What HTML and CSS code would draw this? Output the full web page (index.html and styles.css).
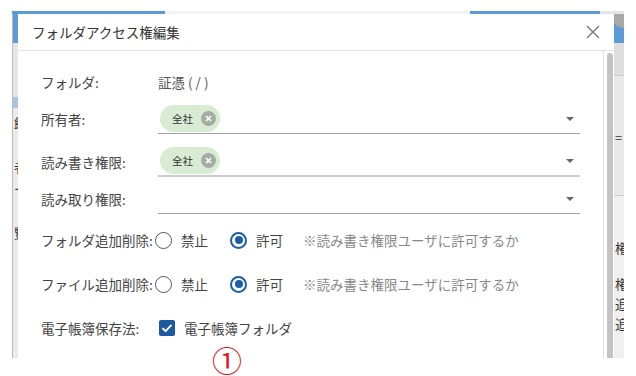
FILE: index.html
```html
<!DOCTYPE html>
<html>
  <head>
    <title>フォルダアクセス権編集</title>
    <meta name="viewport" content="width=device-width, initial-scale=1.0">
    <link rel="stylesheet" href="styles.css">
  </head>
  <body>
    <div class="screen">
      <div class="backdrop">
        <div class="side side-left">
          <span>館</span>
          <span>：</span>
          <span>者</span>
          <span>ー</span>
          <span>：</span>
          <span>覧</span>
        </div>
        <section class="dialog">
          <header class="dialog-head">
            <h1>フォルダアクセス権編集</h1>
            <button class="close" type="button">
              <svg width="14" height="14" viewBox="0 0 14 14"><path d="M1 1L13 13M13 1L1 13" stroke="#777" stroke-width="1.4" fill="none"/></svg>
            </button>
          </header>
          <div class="dialog-body">
            <form class="form">
              <div class="row row-text">
                <span class="label">フォルダ:</span>
                <span class="value">証憑 ( / )</span>
              </div>
              <div class="row row-owner">
                <span class="label">所有者:</span>
                <div class="select">
                  <span class="chip">全社
                    <svg class="chip-x" width="15" height="15" viewBox="0 0 15 15"><circle cx="7.5" cy="7.5" r="7.5" fill="#a3ada1"/><path d="M5 5L10 10M10 5L5 10" stroke="#fff" stroke-width="1.7"/></svg>
                  </span>
                  <span class="caret"></span>
                </div>
              </div>
              <div class="row row-write">
                <span class="label">読み書き権限:</span>
                <div class="select select-light">
                  <span class="chip">全社
                    <svg class="chip-x" width="15" height="15" viewBox="0 0 15 15"><circle cx="7.5" cy="7.5" r="7.5" fill="#a3ada1"/><path d="M5 5L10 10M10 5L5 10" stroke="#fff" stroke-width="1.7"/></svg>
                  </span>
                  <span class="caret"></span>
                </div>
              </div>
              <div class="row row-read">
                <span class="label">読み取り権限:</span>
                <div class="select">
                  <span class="caret"></span>
                </div>
              </div>
              <div class="row row-radio">
                <span class="label">フォルダ追加削除:</span>
                <span class="radio"><span class="dot"></span>禁止</span>
                <span class="radio"><span class="dot is-on"></span>許可</span>
                <span class="note">※読み書き権限ユーザに許可するか</span>
              </div>
              <div class="row row-radio">
                <span class="label">ファイル追加削除:</span>
                <span class="radio"><span class="dot"></span>禁止</span>
                <span class="radio"><span class="dot is-on"></span>許可</span>
                <span class="note">※読み書き権限ユーザに許可するか</span>
              </div>
              <div class="row row-radio">
                <span class="label">電子帳簿保存法:</span>
                <span class="checkbox">
                  <span class="box">
                    <svg width="16" height="16" viewBox="0 0 16 16"><path d="M3.5 8.2L6.6 11.2L12.5 4.8" stroke="#fff" stroke-width="1.8" fill="none"/></svg>
                  </span>
                  電子帳簿フォルダ
                </span>
              </div>
            </form>
            <div class="scrollbar"><div class="thumb"></div></div>
          </div>
        </section>
        <div class="side side-right">
          <span class="avatar"></span>
          <span class="frag frag-a">=</span>
          <span class="frag frag-b">権</span>
          <span class="frag">権</span>
          <span class="frag">追</span>
          <span class="frag">追</span>
        </div>
      </div>
      <span class="marker">①</span>
    </div>
  </body>
</html>
```
FILE: styles.css
```css
* {
  margin: 0;
  padding: 0;
  box-sizing: border-box;
  font-family: "Noto Sans CJK JP", "Noto Sans", sans-serif;
}
body {
  background: #fff;
}
.screen {
  position: relative;
  width: 636px;
  height: 376px;
}
.backdrop {
  display: flex;
  width: 612px;
  height: 347px;
  margin: 11px 12px 0 12px;
  overflow: hidden;
  background:
    linear-gradient(to right, #5b9bd6 0, #5b9bd6 153px, #f3f3f3 153px, #f3f3f3 458px, #5b9bd6 458px, #5b9bd6 588px, #e6e6e6 588px) top / 100% 3px no-repeat,
    #e8e8e8;
}
.side {
  display: flex;
  flex-direction: column;
  margin-top: 3px;
  overflow: hidden;
  font-size: 13px;
  color: #333;
  line-height: 1;
}
.side-left {
  width: 6px;
  border-left: 1px solid #bdbdbd;
  align-items: flex-end;
  background: linear-gradient(#5b9bd6 0, #5b9bd6 29px, #e6e6e6 29px, #e6e6e6 83px, #a9c6e6 83px, #a9c6e6 94px, #eaeaea 94px);
  padding-top: 102px;
}
.side-left span {
  margin-right: -9px;
  height: 22px;
}
.side-right {
  width: 10px;
  padding-left: 1px;
  background: linear-gradient(#5b9bd6 0, #5b9bd6 29px, #dedede 29px, #dedede 61px, #c9c9c9 61px, #c9c9c9 62px, #e9e9e9 62px, #e9e9e9 181px, #cfcfcf 181px, #cfcfcf 182px, #f0f0f0 182px);
}
.avatar {
  display: block;
  width: 22px;
  height: 18px;
  margin-left: -2px;
  margin-top: -4px;
  border-radius: 50%;
  background: #a9a9a9;
}
.frag {
  display: block;
  height: 20px;
}
.frag-a {
  margin-top: 103px;
}
.frag-b {
  margin-top: 90px;
  margin-bottom: 16px;
}
.dialog {
  width: 596px;
  margin-top: 3px;
  background: #fff;
  display: flex;
  flex-direction: column;
}
.dialog-head {
  display: flex;
  align-items: center;
  justify-content: space-between;
  height: 37px;
  padding: 0 14px 0 14px;
  border-bottom: 1px solid #e1e1e1;
}
.dialog-head h1 {
  font-size: 13.5px;
  font-weight: normal;
  color: #333;
}
.close {
  display: flex;
  border: none;
  background: none;
}
.dialog-body {
  display: flex;
  flex: 1;
}
.form {
  flex: 1;
  padding: 19px 23px 0 23px;
}
.row {
  display: flex;
  align-items: center;
  font-size: 13.5px;
  color: #444;
}
.label {
  width: 117px;
  flex-shrink: 0;
  white-space: nowrap;
}
.value {
  color: #555;
}
.row-text {
  height: 24px;
}
.row-owner {
  margin-top: 10px;
}
.row-write {
  margin-top: 12px;
}
.row-read {
  margin-top: 7px;
}
.row-radio {
  height: 24px;
  margin-top: 14px;
}
.row-radio + .row-radio {
  margin-top: 20px;
}
.select {
  flex: 1;
  display: flex;
  align-items: center;
  height: 30px;
  border-bottom: 1px solid #a3a3a3;
}
.select-light {
  height: 31px;
  border-bottom: 2px solid #cdcdcd;
}
.chip {
  display: flex;
  align-items: center;
  gap: 8px;
  height: 27px;
  margin-left: 2px;
  padding: 0 4px 0 12px;
  border-radius: 14px;
  background: #d8ebd3;
  font-size: 10.5px;
  color: #333;
}
.chip-x {
  flex-shrink: 0;
  width: 15px;
  height: 15px;
}
.caret {
  margin-left: auto;
  margin-right: 6px;
  border-left: 4px solid transparent;
  border-right: 4px solid transparent;
  border-top: 4px solid #666;
}
.radio {
  display: flex;
  align-items: center;
  gap: 9px;
}
.row-radio .label {
  margin-right: -3px;
}
.radio + .radio {
  margin-left: 22px;
}
.dot {
  width: 17px;
  height: 17px;
  border: 1.5px solid #555;
  border-radius: 50%;
  display: grid;
  place-items: center;
}
.dot.is-on {
  border: 2px solid #1b5da8;
}
.dot.is-on::after {
  content: "";
  width: 8px;
  height: 8px;
  border-radius: 50%;
  background: #1b5da8;
}
.note {
  margin-left: 20px;
  font-size: 13.5px;
  color: #888;
}
.checkbox {
  display: flex;
  align-items: center;
  gap: 9px;
  margin-left: 4px;
}
.box {
  display: flex;
  width: 16px;
  height: 16px;
  border-radius: 2px;
  background: #1c5a9f;
}
.scrollbar {
  width: 11px;
  border-left: 1px solid #e2e2e2;
  padding: 2px 1px 0 3px;
}
.thumb {
  height: 100%;
  border-radius: 3px 3px 0 0;
  background: #c3c3c3;
}
.marker {
  position: absolute;
  left: 212px;
  top: 330px;
  font-size: 30px;
  line-height: 1.2;
  color: #e3121b;
}
```
